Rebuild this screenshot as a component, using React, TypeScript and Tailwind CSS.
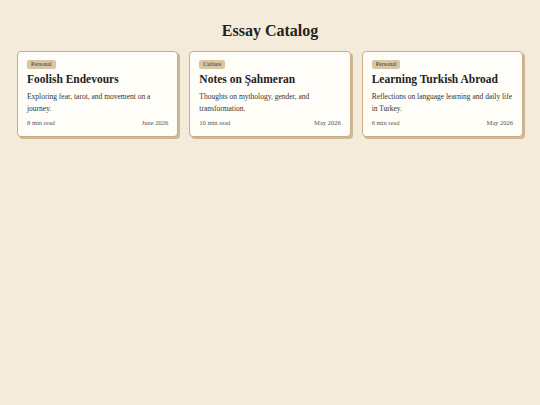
const essays = [
  {
    tag: "Personal",
    title: "Foolish Endevours",
    blurb: "Exploring fear, tarot, and movement on a journey.",
    time: "8 min read",
    date: "June 2026",
  },
  {
    tag: "Culture",
    title: "Notes on Şahmeran",
    blurb: "Thoughts on mythology, gender, and transformation.",
    time: "10 min read",
    date: "May 2026",
  },
  {
    tag: "Personal",
    title: "Learning Turkish Abroad",
    blurb: "Reflections on language learning and daily life in Turkey.",
    time: "6 min read",
    date: "May 2026",
  },
];

const App = () => {
  return (
    <div
      className="min-h-screen bg-[#f5ebda] text-[#222] px-[17px] pt-[20px] antialiased"
      style={{ fontFamily: 'Georgia, "Liberation Serif", serif' }}
    >
      <h1 className="text-center text-[16px] leading-[22px] font-bold mb-[9px]">Essay Catalog</h1>

      <div className="grid grid-cols-3 gap-[11px] items-start">
        {essays.map((e, i) => (
          <div
            key={i}
            className="flex flex-col bg-[#fffdf8] border border-[#c8ad86] rounded-[4px] shadow-[2px_2px_0_#cdb896] px-[9px] pt-[8px] pb-[9px]"
          >
            <span className="self-start bg-[#d9c6a5] text-[#333] text-[6px] leading-[9px] px-[4px] rounded-[2px]">
              {e.tag}
            </span>
            <h2 className="text-[11.5px] leading-[15px] font-bold mt-[3px] mb-[4px]">{e.title}</h2>
            <p className="text-[7.5px] leading-[12px] text-[#333] min-h-[24px]">{e.blurb}</p>
            <div className="flex justify-between text-[6.5px] leading-[9px] text-[#555] mt-[3px]">
              <span>{e.time}</span>
              <span>{e.date}</span>
            </div>
          </div>
        ))}
      </div>
    </div>
  );
};

export default App;
